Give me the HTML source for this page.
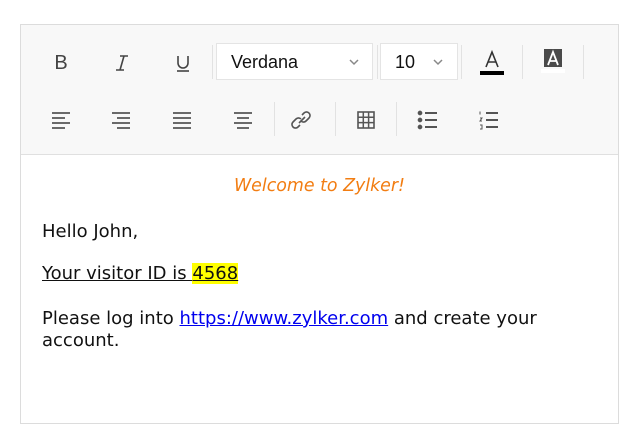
<!DOCTYPE html>
<html><head><meta charset="utf-8"><style>
*{margin:0;padding:0;box-sizing:border-box}
body{width:630px;height:404px;background:#fff;position:relative;overflow:hidden;font-family:"Liberation Sans",sans-serif}
#box{position:absolute;left:20px;top:24px;width:599px;height:400px;border:1px solid #dcdcdc}
#tb{position:absolute;left:0;top:0;width:597px;height:130px;background:#f8f8f8;border-bottom:1px solid #e0e0e0}
.ic{position:absolute;width:28px;height:28px;display:flex;align-items:center;justify-content:center;color:#444}
.sep{position:absolute;width:1px;height:34px;background:#e2e2e2}
.dd{position:absolute;top:18px;height:37px;background:#fff;border:1px solid #e4e4e4;font-size:18px;color:#111;padding:8px 0 0 14px}
.dd svg{position:absolute;top:14px}
#ct{position:absolute;left:0;top:131px;width:597px;font-family:"DejaVu Sans",Verdana,sans-serif;font-size:18px;color:#111}
</style></head><body>
<div id="box">
<div id="tb">
<div class="ic" style="left:26px;top:24px;font-size:20px">B</div>
<div class="ic" style="left:87px;top:24px"><svg width="16" height="20"><path d="M6 3h8M2 17h8M10 3L6 17" fill="none" stroke="#444" stroke-width="1.6"/></svg></div>
<div class="ic" style="left:148px;top:24px"><svg width="16" height="20"><path d="M3 3v7a5 5 0 0 0 10 0V3" fill="none" stroke="#444" stroke-width="1.6"/><path d="M2 18h12" stroke="#444" stroke-width="1.6"/></svg></div>
<div class="sep" style="left:191px;top:20px"></div>
<div class="dd" style="left:195px;width:157px">Verdana<svg style="left:131px" width="12" height="8"><path d="M2 2l4 4 4-4" fill="none" stroke="#888" stroke-width="1.5"/></svg></div>
<div class="sep" style="left:356px;top:20px"></div>
<div class="dd" style="left:359px;width:78px">10<svg style="left:51px" width="12" height="8"><path d="M2 2l4 4 4-4" fill="none" stroke="#888" stroke-width="1.5"/></svg></div>
<div class="sep" style="left:440px;top:20px"></div>
<div class="ic" style="left:457px;top:22px;flex-direction:column"><svg width="26" height="32"><path d="M7 20L13 5l6 15M9.5 15h7" fill="none" stroke="#333" stroke-width="1.6"/><rect x="1" y="24" width="24" height="4" fill="#000"/></svg></div>
<div class="sep" style="left:501px;top:20px"></div>
<div class="ic" style="left:518px;top:22px"><svg width="26" height="32"><rect x="4" y="4" width="18" height="18" fill="#4a4a4a"/><path d="M8 20L13 7l5 13M10 16h6" fill="none" stroke="#fff" stroke-width="1.8"/><rect x="1" y="24" width="24" height="4" fill="#fff"/></svg></div>
<div class="sep" style="left:562px;top:20px"></div>
<svg style="position:absolute;left:0;top:80px" width="597" height="30" fill="none" stroke="#555" stroke-width="1.7">
<path d="M31 8h18M31 13h13M31 18h18M31 23h13"/>
<path d="M91 8h18M96 13h13M91 18h18M96 23h13"/>
<path d="M152 8h18M152 13h18M152 18h18M152 23h18"/>
<path d="M213 8h18M216 13h12M213 18h18M216 23h12"/>
<path d="M279 20l-2 2a3.5 3.5 0 0 1-5-5l3-3a3.5 3.5 0 0 1 5 0M281 10l2-2a3.5 3.5 0 0 1 5 5l-3 3a3.5 3.5 0 0 1-5 0M278 18l6-6" stroke-width="1.6"/>
<rect x="337" y="7" width="16" height="16" stroke-width="1.6"/><path d="M337 12.3h16M337 17.6h16M342.3 7v16M347.6 7v16" stroke-width="1.5"/>
<path d="M404 8h12M404 15h12M404 22h12" stroke-width="2"/>
<circle cx="399" cy="8" r="1.5" fill="#555"/><circle cx="399" cy="15" r="1.5" fill="#555"/><circle cx="399" cy="22" r="1.5" fill="#555"/>
<path d="M465 8h12M465 15h12M465 22h12" stroke-width="2"/>
<path d="M459 6.5v3M459 13h2l-2 3h2M459 20h2v4h-2" stroke-width="1"/>
</svg>
<div class="sep" style="left:253px;top:77px"></div>
<div class="sep" style="left:314px;top:77px"></div>
<div class="sep" style="left:375px;top:77px"></div>
</div>
<div id="ct">
<div style="position:absolute;left:0;width:597px;top:20px;text-align:center;color:#f27d12;font-style:italic;font-size:17.4px">Welcome to Zylker!</div>
<div style="position:absolute;left:21px;top:65px">Hello John,</div>
<div style="position:absolute;left:21px;top:107px;text-decoration:underline">Your visitor ID is <span style="background:#ffff00">4568</span></div>
<div style="position:absolute;left:21px;top:152px;line-height:22px;width:560px">Please log into <span style="color:#0000ee;text-decoration:underline">https://www.zylker.com</span> and create your account.</div>
</div>
</div>
</body></html>
